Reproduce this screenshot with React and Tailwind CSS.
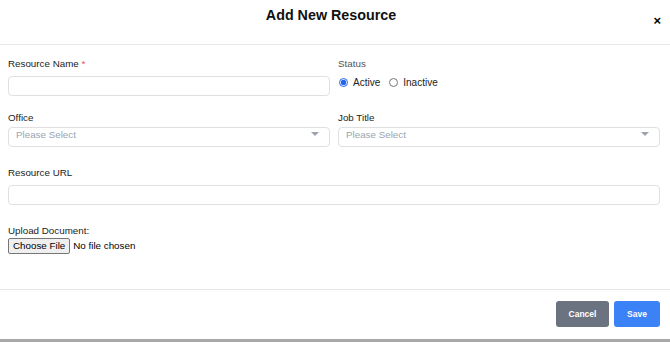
import React, { useState } from 'react';

const Caret = () => (
  <svg width="8" height="5" viewBox="0 0 8 5" className="absolute right-[10px] top-[4px]">
    <path d="M0 0 L8 0 L4 4 Z" fill="#9ca3af" />
  </svg>
);

const App = () => {
  const [status, setStatus] = useState('active');

  return (
    <div className="w-[670px] h-[342px] bg-white flex flex-col font-['Liberation_Sans',Arial,sans-serif] text-[#222]">
      {/* Cabecera */}
      <div className="relative h-[45px] border-b border-[#e5e7eb] flex justify-center pt-[5px] pr-[8px] shrink-0">
        <h2 className="text-[14.3px] font-bold text-[#111] leading-[20px]">Add New Resource</h2>
        <button className="absolute right-[9px] top-[14px] text-[13px] font-bold leading-none text-black">×</button>
      </div>

      {/* Cuerpo del formulario */}
      <div className="flex-1 pl-[8px] pr-[10px] pt-[12px] text-[9.8px]">
        <div className="grid grid-cols-2 gap-x-[8px]">
          <div>
            <label className="block leading-[14px] mb-[5px]">
              Resource Name <span className="text-[#ef4444]">*</span>
            </label>
            <input className="w-full h-[20px] border border-[#e0e0e0] rounded-[4px] outline-none" />
          </div>
          <div>
            <div className="text-[#555] leading-[14px] mb-[5px]">Status</div>
            <div className="flex items-center gap-[4px] h-[12px]">
              <label className="flex items-center gap-[5px]">
                <input
                  type="radio"
                  checked={status === 'active'}
                  onChange={() => setStatus('active')}
                  className="m-0 ml-[1px] w-[9px] h-[9px] accent-[#2563eb]"
                />
                <span className="text-[10px]">Active</span>
              </label>
              <label className="flex items-center gap-[5px] ml-[5px]">
                <input
                  type="radio"
                  checked={status === 'inactive'}
                  onChange={() => setStatus('inactive')}
                  className="m-0 w-[9px] h-[9px]"
                />
                <span className="text-[10px]">Inactive</span>
              </label>
            </div>
          </div>
        </div>

        <div className="grid grid-cols-2 gap-x-[8px] mt-[15px]">
          <div>
            <label className="block leading-[14px] mb-[2px]">Office</label>
            <div className="relative h-[20px] border border-[#e0e0e0] rounded-[4px] pl-[7px] text-[#9ca3af] leading-[13px]">
              Please Select
              <Caret />
            </div>
          </div>
          <div>
            <label className="block leading-[14px] mb-[2px]">Job Title</label>
            <div className="relative h-[20px] border border-[#e0e0e0] rounded-[4px] pl-[7px] text-[#9ca3af] leading-[13px]">
              Please Select
              <Caret />
            </div>
          </div>
        </div>

        <div className="mt-[19px]">
          <label className="block leading-[14px] mb-[5px]">Resource URL</label>
          <input className="w-full h-[20px] border border-[#e0e0e0] rounded-[4px] outline-none" />
        </div>

        <div className="mt-[19px]">
          <label className="block leading-[14px]">Upload Document:</label>
          <div className="flex items-center">
            <span className="h-[16px] px-[4px] border border-[#767676] bg-[#efefef] rounded-[2px] leading-[14px] text-black">
              Choose File
            </span>
            <span className="ml-[3px] text-black">No file chosen</span>
          </div>
        </div>
      </div>

      {/* Pie */}
      <div className="h-[50px] border-t border-[#e5e7eb] flex justify-end items-start gap-[5px] px-[10px] pt-[11px] shrink-0">
        <button className="w-[53px] h-[26px] bg-[#6b7280] text-white text-[8.5px] font-bold rounded-[3px]">Cancel</button>
        <button className="w-[46px] h-[26px] bg-[#3b82f6] text-white text-[8.5px] font-bold rounded-[3px]">Save</button>
      </div>
      <div className="h-[3px] bg-[#a8a8a8] shrink-0" />
    </div>
  );
};

export default App;
